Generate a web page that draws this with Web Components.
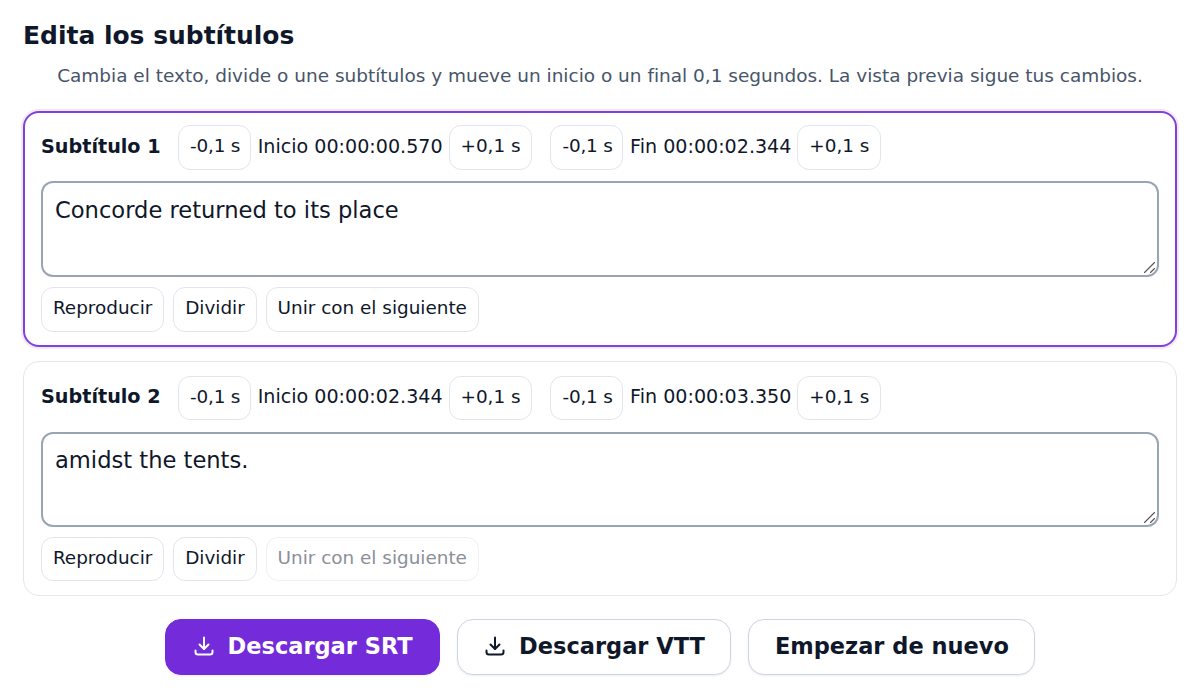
<!DOCTYPE html>
<html lang="es">
<head>
<meta charset="utf-8">
<title>Edita los subtítulos</title>
<style>
  html, body { margin: 0; background: #fff; }
  body { font-family: "DejaVu Sans", sans-serif; color: #0f172a; }
</style>
</head>
<body>
<subtitle-editor>
  <subtitle-card index="1" start="00:00:00.570" end="00:00:02.344" text="Concorde returned to its place" active></subtitle-card>
  <subtitle-card index="2" start="00:00:02.344" end="00:00:03.350" text="amidst the tents." last></subtitle-card>
  <div slot="actions" style="display:contents">
    <action-button variant="primary" icon>Descargar SRT</action-button>
    <action-button icon>Descargar VTT</action-button>
    <action-button>Empezar de nuevo</action-button>
  </div>
</subtitle-editor>

<script>
class SmallButton extends HTMLElement {
  constructor() {
    super();
    this.attachShadow({ mode: 'open' });
    this.shadowRoot.innerHTML = `
      <style>
        :host { display: inline-block; }
        button {
          display: block;
          box-sizing: border-box;
          height: 44.5px;
          padding: 0 10.9px 2px;
          font: 18.4px/1 "DejaVu Sans", sans-serif;
          color: #0f172a;
          background: #fff;
          border: 1px solid #e2e5ec;
          border-radius: 12px;
          white-space: nowrap;
        }
        :host([minus]) button { padding-left: 11px; padding-right: 9.500px; letter-spacing: -.2px; }
        button:disabled { color: #8b8f98; border-color: #eff0f3; }
      </style>
      <button ${this.hasAttribute('disabled') ? 'disabled' : ''}><slot></slot></button>
    `;
  }
}

class SubtitleCard extends HTMLElement {
  constructor() {
    super();
    this.attachShadow({ mode: 'open' });
    const n = this.getAttribute('index');
    const start = this.getAttribute('start');
    const end = this.getAttribute('end');
    const text = this.getAttribute('text');
    const last = this.hasAttribute('last');
    this.shadowRoot.innerHTML = `
      <style>
        :host {
          display: block;
          box-sizing: border-box;
          padding: 14px 17px 14px;
          border: 1px solid #e5e7eb;
          border-radius: 16px;
          background: #fff;
          font: 19.1px/1.2 "DejaVu Sans", sans-serif;
          color: #0f172a;
        }
        :host([active]) {
          border: 2px solid #8141dd;
          padding: 12px 16px 13px;
          box-shadow: 0 0 0 2px #f1e8fc;
        }
        .times { display: flex; align-items: center; }
        strong { font-size: 19.2px; font-weight: 700; margin-right: 17.500px; padding-bottom: 2px; white-space: nowrap; }
        .time { margin: 0 6px 0 7px; white-space: nowrap; }
        .spacer { width: 18px; }
        .field { position: relative; margin: 12px 0 10px; }
        :host([active]) .field { margin-top: 11.500px; }
        textarea {
          display: block;
          box-sizing: border-box;
          width: 100%;
          height: 94.500px;
          padding: 11.500px 12px;
          font: 22.6px/1.3 "DejaVu Sans", sans-serif;
          color: #0f172a;
          background: #fff;
          border: 2px solid #9aa5b4;
          border-radius: 12px;
          outline: none;
          resize: none;
        }
        :host([active]) textarea { height: 96px; padding-top: 13px; }
        .grip { position: absolute; right: 3px; bottom: 3px; }
        .row { display: flex; gap: 9px; }
      </style>
      <div class="times">
        <strong>Subtítulo ${n}</strong>
        <small-button minus>-0,1 s</small-button>
        <span class="time">Inicio ${start}</span>
        <small-button>+0,1 s</small-button>
        <span class="spacer"></span>
        <small-button minus>-0,1 s</small-button>
        <span class="time">Fin ${end}</span>
        <small-button>+0,1 s</small-button>
      </div>
      <div class="field">
        <textarea spellcheck="false">${text}</textarea>
        <svg class="grip" width="13" height="13" viewBox="0 0 13 13" fill="none" stroke="#555" stroke-width="1.100" stroke-linecap="round">
          <path d="M1.500 11.500 11.500 1.500"/><path d="M7.500 11.500 11.500 7.500"/>
        </svg>
      </div>
      <div class="row">
        <small-button>Reproducir</small-button>
        <small-button>Dividir</small-button>
        <small-button ${last ? 'disabled' : ''}>Unir con el siguiente</small-button>
      </div>
    `;
  }
}

class ActionButton extends HTMLElement {
  constructor() {
    super();
    this.attachShadow({ mode: 'open' });
    const icon = this.hasAttribute('icon') ? `
      <svg width="24" height="24" viewBox="0 0 24 24" fill="none" stroke="currentColor" stroke-width="2" stroke-linecap="round" stroke-linejoin="round">
        <path d="M12 3.500v11.500"/><path d="M7.500 10.500 12 15l4.500-4.500"/><path d="M3.500 16.500v1.500a2.500 2.500 0 0 0 2.500 2.500h12a2.500 2.500 0 0 0 2.500-2.500v-1.500"/>
      </svg>` : '';
    this.shadowRoot.innerHTML = `
      <style>
        :host { display: inline-block; }
        button {
          box-sizing: border-box;
          display: flex;
          align-items: center;
          justify-content: center;
          gap: 12px;
          height: 56px;
          padding: 0 25.500px 2px;
          font: 700 22.5px/1 "DejaVu Sans", sans-serif;
          color: #0f172a;
          background: #fff;
          border: 1px solid #ced5e2;
          border-radius: 16px;
          box-shadow: 0 1px 2px rgba(17, 24, 39, .08);
          white-space: nowrap;
        }
        :host([variant="primary"]) button {
          padding: 0 26px 2px;
          color: #fff;
          background: #742bd9;
          border-color: #742bd9;
        }
      </style>
      <button>${icon}<slot></slot></button>
    `;
  }
}

class SubtitleEditor extends HTMLElement {
  constructor() {
    super();
    this.attachShadow({ mode: 'open' });
    this.shadowRoot.innerHTML = `
      <style>
        :host {
          display: block;
          box-sizing: border-box;
          width: 1200px;
          height: 697px;
          overflow: hidden;
          padding: 19px 23px 0;
          font-family: "DejaVu Sans", sans-serif;
          color: #0f172a;
        }
        h2 { margin: 0; font-size: 24.96px; line-height: 34px; font-weight: 700; }
        p {
          margin: 11px 0 23px;
          font-size: 18.48px;
          line-height: 24px;
          text-align: center;
          color: #475569;
        }
        .cards { display: flex; flex-direction: column; gap: 14px; }
        .actions { display: flex; justify-content: center; gap: 17px; margin-top: 23px; }
      </style>
      <h2>Edita los subtítulos</h2>
      <p>Cambia el texto, divide o une subtítulos y mueve un inicio o un final 0,1 segundos. La vista previa sigue tus cambios.</p>
      <div class="cards"><slot></slot></div>
      <div class="actions"><slot name="actions"></slot></div>
    `;
  }
}

customElements.define('small-button', SmallButton);
customElements.define('subtitle-card', SubtitleCard);
customElements.define('action-button', ActionButton);
customElements.define('subtitle-editor', SubtitleEditor);
</script>
</body>
</html>
